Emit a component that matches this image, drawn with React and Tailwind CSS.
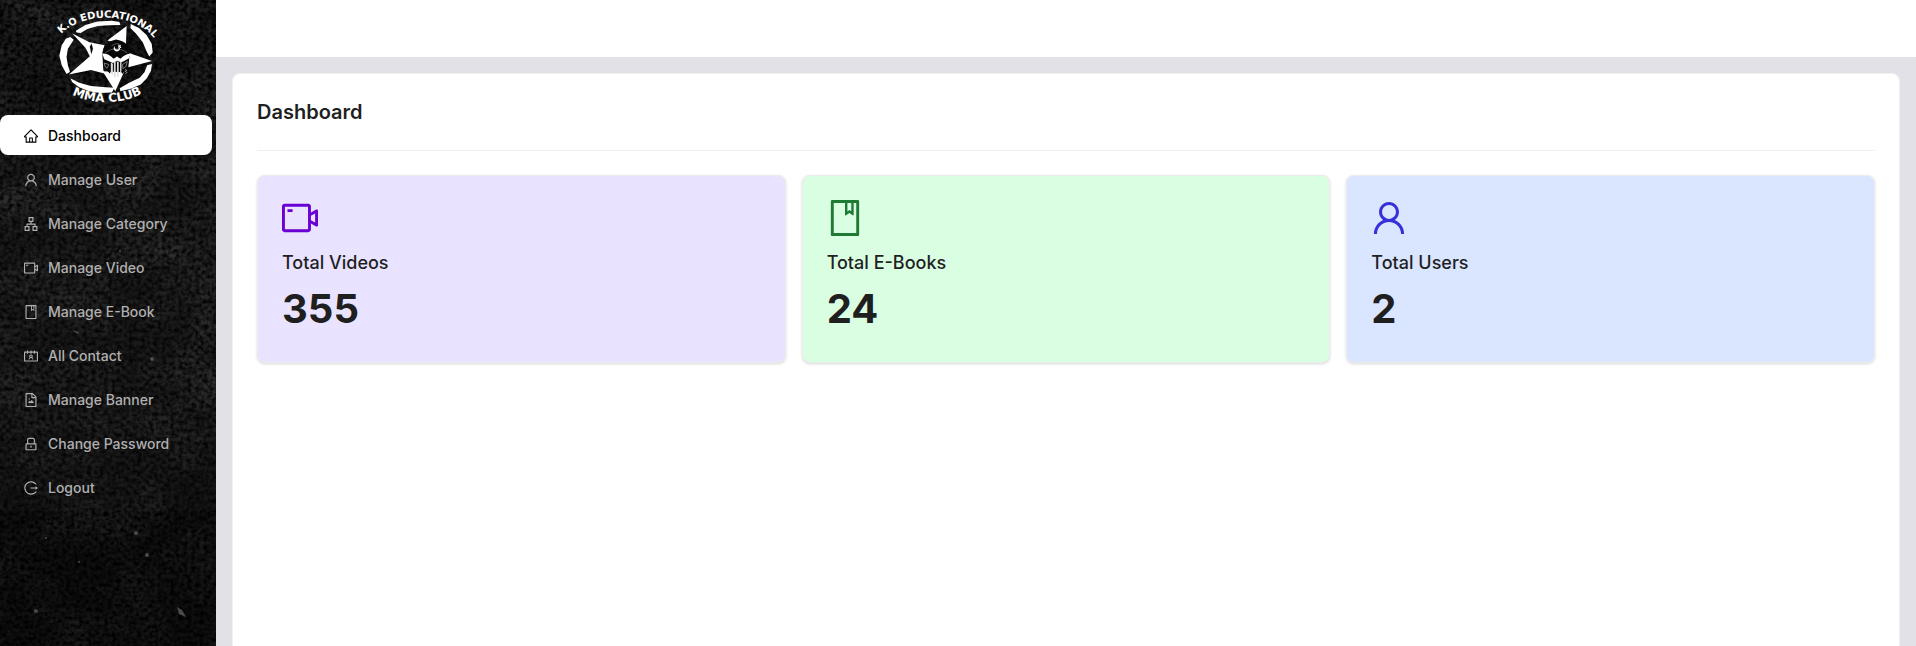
import {
  AiOutlineHome,
  AiOutlineUser,
  AiOutlineApartment,
  AiOutlineVideoCamera,
  AiOutlineBook,
  AiOutlineContacts,
  AiOutlineFileImage,
  AiOutlineLock,
  AiOutlineLogout,
} from "react-icons/ai";

const ICON_BOX = "64 64 896 896";

const menu = [
  { label: "Dashboard", icon: AiOutlineHome, active: true },
  { label: "Manage User", icon: AiOutlineUser },
  { label: "Manage Category", icon: AiOutlineApartment },
  { label: "Manage Video", icon: AiOutlineVideoCamera },
  { label: "Manage E-Book", icon: AiOutlineBook },
  { label: "All Contact", icon: AiOutlineContacts },
  { label: "Manage Banner", icon: AiOutlineFileImage },
  { label: "Change Password", icon: AiOutlineLock },
  { label: "Logout", icon: AiOutlineLogout },
];

const stats = [
  { label: "Total Videos", value: 355, icon: AiOutlineVideoCamera, card: "bg-[#e9e3ff]", tone: "text-[#6a00d4]" },
  { label: "Total E-Books", value: 24, icon: AiOutlineBook, card: "bg-[#dafee2]", tone: "text-[#1f7a34]" },
  { label: "Total Users", value: 2, icon: AiOutlineUser, card: "bg-[#dae5ff]", tone: "text-[#3730d8]" },
];

// Dark grunge wall behind the sidebar: coarse patches plus fine grain.
function Texture() {
  return (
    <svg className="absolute inset-0 h-full w-full" aria-hidden="true">
      <filter id="patches" x="0" y="0" width="100%" height="100%" colorInterpolationFilters="sRGB">
        <feTurbulence type="fractalNoise" baseFrequency="0.018 0.022" numOctaves="4" seed="8" />
        <feColorMatrix values="0 0 0 0 0.16  0 0 0 0 0.16  0 0 0 0 0.16  2.6 0 0 0 -1" />
      </filter>
      <filter id="grain" x="0" y="0" width="100%" height="100%" colorInterpolationFilters="sRGB">
        <feTurbulence type="fractalNoise" baseFrequency="0.24" numOctaves="2" seed="3" />
        <feColorMatrix values="0 0 0 0 0  0 0 0 0 0  0 0 0 0 0  0 2.2 0 0 -0.7" />
      </filter>
      <linearGradient id="fade" x1="0" y1="0" x2="0" y2="1">
        <stop offset="0.6" stopColor="#000" stopOpacity="0" />
        <stop offset="0.85" stopColor="#000" stopOpacity="0.35" />
      </linearGradient>
      <rect width="100%" height="100%" fill="#171717" />
      <rect width="100%" height="100%" filter="url(#patches)" />
      <rect width="100%" height="100%" filter="url(#grain)" />
      <rect width="100%" height="100%" fill="url(#fade)" />
      <g fill="#4a4a4a">
        <path d="M177 607l5 3 4 7-7-3z" />
        <circle cx="152" cy="359" r="2" />
        <circle cx="36" cy="611" r="2" />
        <circle cx="136" cy="533" r="2" />
        <circle cx="46" cy="538" r="1" />
        <circle cx="147" cy="555" r="2" />
        <circle cx="79" cy="562" r="1" />
        <circle cx="120" cy="251" r="1" />
        <path d="M72 330l7 2-1 2z" />
      </g>
    </svg>
  );
}

function Logo() {
  return (
    <svg className="h-26 w-28" viewBox="0 0 336 312" role="img" aria-label="K.O Educational MMA Club">
      <defs>
        <path id="arc-top" d="M26 98A162 112 0 0 1 318 112" />
        <path id="arc-bottom" d="M42 256A160 98 0 0 0 300 252" />
      </defs>
      <g transform="translate(-5 -4) scale(1.03)">
        <g fill="#fff">
          <path d="M80 82l28-17 35-10 42-2 22 3 3 9-34 1-32 2-30 9-20 11-12-1z" />
          <path d="M240 62l24 12 22 20 15 26 3 25-10 12-9-18-10-24-20-25-16-16z" />
          <path d="M288 182l14-3-3 19-12 22-18 18-27 12-32 8-2-9 26-15 32-15 14-16z" />
          <path d="M64 220l26 13 34 10 44 3 25 2-8 14-35 1-32-5-28-12-20-14z" />
          <path d="M64 100l10 8-17 26-4 24 4 24 6 20-10 6-14-26-7-28 7-30 12-19z" />
          <path d="M70 90L120 115 164 124 157 146 160 196 166 207 124 196 60 209 121 156 108 131Z" />
          <path d="M228 68L172 110 197 118 226 122ZM302 170L237 147 233 188Z" />
          <path d="M158 200L195 258 220 203Z" />
        </g>
        <path d="M160 148Q156 116 197 107Q238 114 237 148L231 188 215 208 211 196 184 196 179 206 163 188Z" fill="#080808" />
        <path d="M121 128l5-9 4 15-5 17z" fill="#080808" />
        <path d="M184 126q17-13 28-1M166 146q30-24 64 0" stroke="#777" strokeWidth="2" fill="none" />
        <path d="M193 127a9 9 0 1 0 14 1 7 7 0 1 1-12-3zM204 122l4 3 4-2-2 5 3 4-5-1-4 3z" fill="#fff" />
        <path
          d="M157 148Q175 147 190 163L200 157 210 163Q225 149 239 148L235 162 221 170 211 174 203 169 197 171 188 176 163 165Z"
          fill="#fff"
        />
        <path d="M182 174l6 4v34l-6-7zM191 172l5 1v46l-5-4zM200 172l5-1v42l-5 5zM209 174l4-3v28l-4 9z" fill="#ddd" />
        <path
          d="M163 176l13 4-5 11-6-5zM216 180l14-9-4 15-9 6zM223 194l6 3-6 3 7 3-6 4"
          stroke="#aaa"
          strokeWidth="2"
          fill="none"
        />
      </g>
      <g className="font-['DejaVu_Sans'] font-bold" fill="#fff" textAnchor="middle">
        <text className="text-[30px]">
          <textPath href="#arc-top" startOffset="50%">
            K.O EDUCATIONAL
          </textPath>
        </text>
        <text className="text-[36px]">
          <textPath href="#arc-bottom" startOffset="50%">
            MMA CLUB
          </textPath>
        </text>
      </g>
    </svg>
  );
}

function Sidebar() {
  return (
    <aside className="relative w-[216px] shrink-0 overflow-hidden bg-black">
      <Texture />
      <div className="relative flex h-[115px] justify-center pt-1 pr-1">
        <Logo />
      </div>
      <nav className="relative bg-white/2 pr-1 pb-1">
        <ul className="flex flex-col gap-1">
          {menu.map(({ label, icon: Icon, active }) => (
            <li key={label}>
              <a
                href="#"
                aria-current={active ? "page" : undefined}
                className={`flex h-10 items-center gap-[10px] rounded-lg pt-px pl-6 text-sm font-medium ${
                  active ? "bg-white text-black" : "text-[#b0b0b0]"
                }`}
              >
                <Icon viewBox={ICON_BOX} size={14} aria-hidden="true" />
                {label}
              </a>
            </li>
          ))}
        </ul>
      </nav>
    </aside>
  );
}

function StatCard({ label, value, icon: Icon, card, tone }) {
  return (
    <section className={`rounded-lg border border-[#ececec] p-6 shadow-[0_1px_3px_rgba(0,0,0,0.16)] ${card}`}>
      <Icon viewBox={ICON_BOX} size={36} className={tone} aria-hidden="true" />
      <h2 className="mt-3 text-lg leading-[30px] font-medium">{label}</h2>
      <p className="mt-2 mb-1.5 text-[40px] leading-[46px] font-bold">{value}</p>
    </section>
  );
}

export default function App() {
  return (
    <div className="flex min-h-screen bg-[#e1e1e7] font-['Inter',sans-serif] text-[#1f1f1f]">
      <Sidebar />
      <div className="flex min-w-0 flex-1 flex-col">
        <header className="h-[57px] bg-white" />
        <main className="mx-4 mt-4 flex-1 rounded-t-lg border border-b-0 border-[#f0f0f0] bg-white px-6">
          <h1 className="border-b border-[#f0f0f0] pt-6 pb-6 text-xl leading-7 font-semibold">Dashboard</h1>
          <div className="mt-6 grid grid-cols-3 gap-4">
            {stats.map((s) => (
              <StatCard key={s.label} {...s} />
            ))}
          </div>
        </main>
      </div>
    </div>
  );
}
